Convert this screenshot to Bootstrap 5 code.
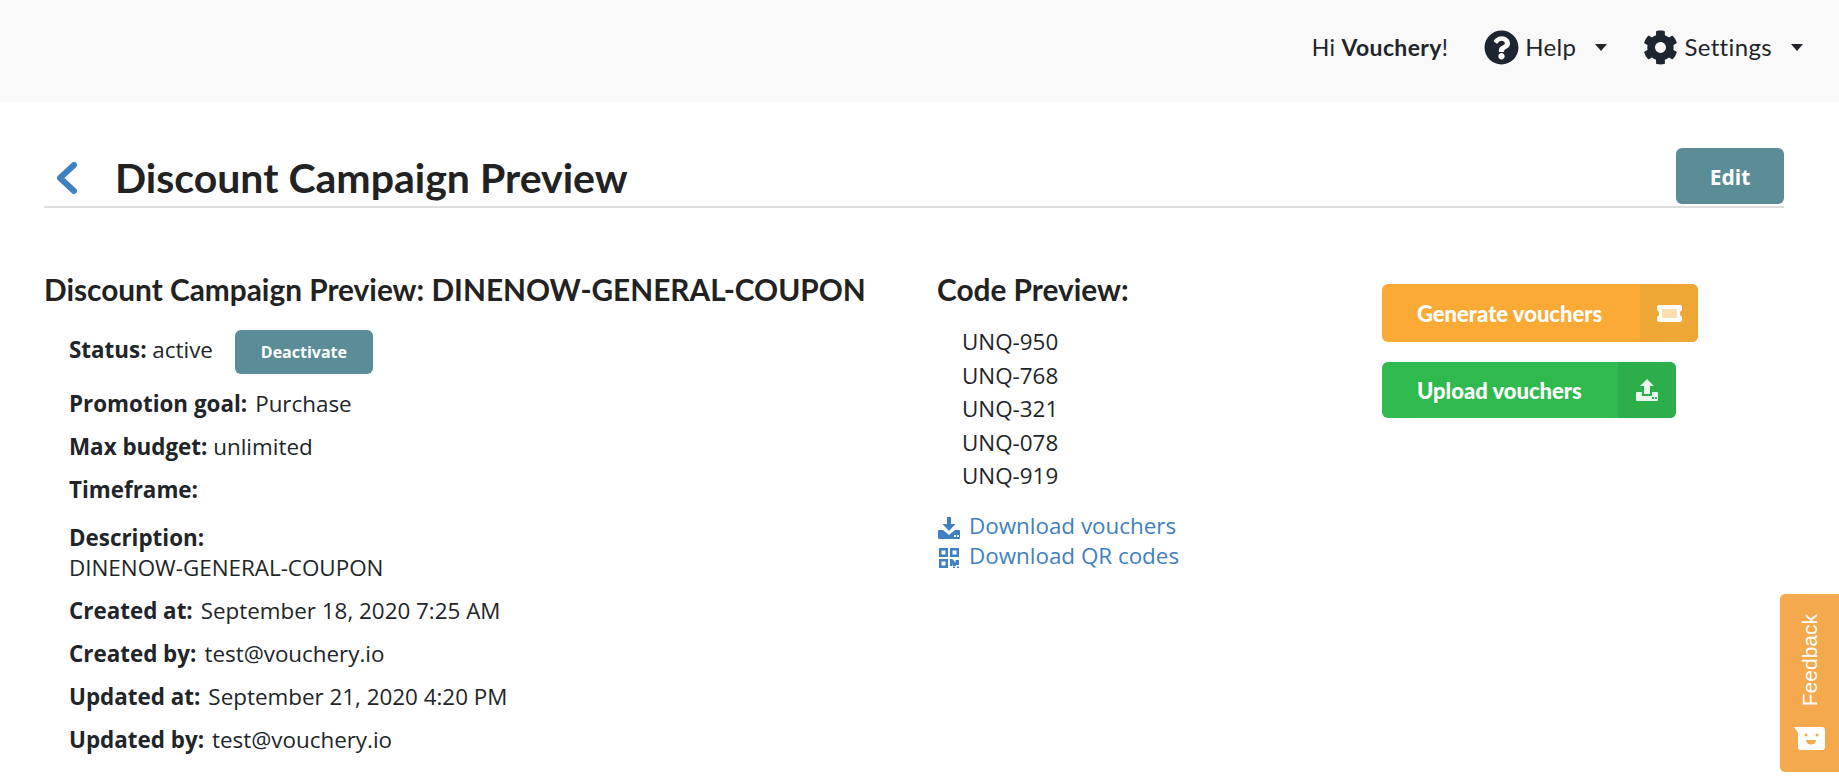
<!DOCTYPE html>
<html lang="en">
<head>
    <meta charset="UTF-8">
    <meta name="viewport" content="width=device-width, initial-scale=1.0">
    <title>Discount Campaign Preview</title>
    <link href="https://cdn.jsdelivr.net/npm/bootstrap@5.3.0/dist/css/bootstrap.min.css" rel="stylesheet">
    <style>
        body { font-family: "Open Sans", sans-serif; font-size: 22.4px; color: #212529; overflow: hidden; height: 778px; }
        .top-bar { height: 102px; background: #f9f9f9; padding: 0 36px 8px 0; font-family: Lato, sans-serif; font-size: 24px; letter-spacing: .35px; }
        .top-bar svg { display: block; margin-right: 6px; }
        .top-item { margin-left: 36px; }
        .hi-user { font-size: 23px; }
        .caret-down { width: 0; height: 0; margin-left: 19px; border-left: 6.5px solid transparent; border-right: 6.5px solid transparent; border-top: 7px solid #212529; }
        .page-head { margin: 46px 55px 0 44px; height: 58px; border-bottom: 2px solid #ddd; box-sizing: content-box; }
        .page-head h1 { font-family: Lato, sans-serif; font-weight: 700; font-size: 41px; color: #222; margin: 0 0 0 37px; line-height: 60px; }
        .back-arrow { margin-left: 10px; }
        .btn-teal { background: #5a8d96; color: #fff; font-weight: 700; border: 0; border-radius: 6px; }
        .btn-teal:hover { background: #5a8d96; color: #fff; }
        .btn-edit { width: 108px; height: 56px; font-size: 21px; padding-top: 9px; }
        .btn-deact { width: 138px; height: 44px; font-size: 16px; padding: 0; margin-left: 22px; }
        .main-cols { margin: 64px 55px 0 44px; }
        .info-col { width: 893px; }
        .code-col { width: 445px; }
        .sub-title { font-family: Lato, sans-serif; font-weight: 700; font-size: 29.8px; color: #222; margin: 0; line-height: 36px; }
        .info-list { padding-left: 25px; margin-top: 22px; }
        .info-row { line-height: 30px; margin-top: 13px; }
        .info-val { margin-left: 8px; }
        .status-text { padding-bottom: 4px; }
        .row-after-status { margin-top: 15px; }
        .row-gap { margin-top: 18px; }
        .code-list { padding-left: 25px; margin-top: 17px; line-height: 33.5px; }
        .dl-links { margin-top: 18px; line-height: 30px; }
        .dl-links a { color: #3f80c0; text-decoration: none; }
        .act-stack { margin-top: 12px; gap: 20px; }
        .act-btn { height: 58px; display: flex; align-items: stretch; color: #fff; font-family: Lato, sans-serif; font-weight: 900; border-radius: 6px; overflow: hidden; font-size: 22px; text-decoration: none; width: 316px; }
        .act-label { flex: 1; padding-left: 35px; display: flex; align-items: center; }
        .act-icon { width: 58px; display: flex; align-items: center; justify-content: center; }
        .act-orange { background: #fbaa35; }
        .act-orange .act-icon { background: #eea735; }
        .act-green { background: #2fba4f; height: 56px; width: 294px; }
        .act-green .act-icon { background: #2cae4a; }
        .feedback-tab { position: absolute; right: 0; top: 594px; width: 59px; height: 178px; background: #f3a94c; border-radius: 5px 0 0 5px; color: #fff; font-family: "Liberation Sans", sans-serif; font-size: 21px; }
        .feedback-text { position: absolute; left: 18px; top: 20px; writing-mode: vertical-rl; transform: rotate(180deg); line-height: 24px; }
        .feedback-face { position: absolute; left: 14px; top: 133px; }
    </style>
</head>
<body class="position-relative">
<div class="top-bar d-flex justify-content-end align-items-center">
    <span class="hi-user">Hi <b>Vouchery</b>!</span>
    <span class="d-flex align-items-center top-item">
        <svg width="35" height="35" viewBox="0 0 512 512" fill="#1c2530"><path d="M504 256c0 137-111 248-248 248S8 393 8 256 119 8 256 8s248 111 248 248zM263 90c-55 0-90 23-118 64-4 5-3 13 3 17l35 26c5 4 13 3 17-2 18-23 31-36 58-36 21 0 47 14 47 34 0 15-13 23-33 35-24 13-56 30-56 72v10c0 7 5 12 12 12h56c7 0 12-5 12-12v-6c0-29 85-31 85-110 0-60-62-104-118-104zm-7 246c-26 0-47 21-47 47s21 47 47 47 47-21 47-47-21-47-47-47z"/></svg>
        Help
        <span class="caret-down"></span>
    </span>
    <span class="d-flex align-items-center top-item">
        <svg width="35" height="35" viewBox="0 0 512 512" fill="#1c2530"><path d="M487 316l-42-25c4-23 4-47 0-70l42-25c5-3 7-9 6-14-11-36-30-68-55-95-4-4-10-5-15-2l-42 25c-18-15-39-27-61-35V26c0-6-4-11-9-12-37-8-75-8-110 0-6 1-10 6-10 12v49c-22 8-43 20-61 35L88 85c-5-3-11-2-15 2-25 27-44 59-55 95-2 5 1 11 6 14l42 25c-4 23-4 47 0 70l-42 25c-5 3-8 9-6 14 11 36 30 68 55 95 4 4 10 5 15 2l42-25c18 15 39 27 61 35v49c0 6 4 11 10 12 37 8 75 8 110 0 5-1 9-6 9-12v-49c22-8 43-20 61-35l42 25c5 3 11 2 15-2 25-27 44-59 55-95 1-5-1-11-6-14zM256 336c-44 0-80-36-80-80s36-80 80-80 80 36 80 80-36 80-80 80z"/></svg>
        Settings
        <span class="caret-down"></span>
    </span>
</div>

<div class="page-head d-flex align-items-start justify-content-between">
    <div class="d-flex align-items-center">
        <svg class="back-arrow" width="24" height="34" viewBox="0 0 24 34" fill="none" stroke="#3f80c0" stroke-width="6" stroke-linecap="round" stroke-linejoin="round"><path d="M20 4 6 17l14 13"/></svg>
        <h1>Discount Campaign Preview</h1>
    </div>
    <button class="btn btn-teal btn-edit">Edit</button>
</div>

<div class="main-cols d-flex">
    <div class="info-col">
        <h2 class="sub-title">Discount Campaign Preview: DINENOW-GENERAL-COUPON</h2>
        <div class="info-list">
            <div class="d-flex align-items-center"><span class="status-text"><strong>Status:</strong> active</span><button class="btn btn-teal btn-deact">Deactivate</button></div>
            <div class="info-row row-after-status"><strong>Promotion goal:</strong><span class="info-val">Purchase</span></div>
            <div class="info-row"><strong>Max budget:</strong> unlimited</div>
            <div class="info-row"><strong>Timeframe:</strong></div>
            <div class="info-row row-gap"><strong>Description:</strong><br>DINENOW-GENERAL-COUPON</div>
            <div class="info-row"><strong>Created at:</strong><span class="info-val">September 18, 2020 7:25 AM</span></div>
            <div class="info-row"><strong>Created by:</strong><span class="info-val">test@vouchery.io</span></div>
            <div class="info-row"><strong>Updated at:</strong><span class="info-val">September 21, 2020 4:20 PM</span></div>
            <div class="info-row"><strong>Updated by:</strong><span class="info-val">test@vouchery.io</span></div>
        </div>
    </div>
    <div class="code-col">
        <h2 class="sub-title">Code Preview:</h2>
        <div class="code-list">
            <div>UNQ-950</div><div>UNQ-768</div><div>UNQ-321</div><div>UNQ-078</div><div>UNQ-919</div>
        </div>
        <div class="dl-links">
            <div><svg width="24" height="24" viewBox="0 0 24 24" fill="#3f80c0" class="me-2 align-middle"><path fill-rule="evenodd" d="M10 1h4v7h4.500L12 15 5.500 8H10zM1 15a1 1 0 0 1 1-1h4l6 5 6-5h4a1 1 0 0 1 1 1v7a1 1 0 0 1-1 1H2a1 1 0 0 1-1-1zM17 19v2h2v-2zM20 19v2h2v-2z"/></svg><a href="#">Download vouchers</a></div>
            <div><svg width="24" height="24" viewBox="0 0 24 24" fill="#3f80c0" class="me-2 align-middle"><path fill-rule="evenodd" d="M2 2h9v9H2zM4.500 4.500v4h4v-4zM13 2h9v9h-9zM15.500 4.500v4h4v-4zM2 13h9v9H2zM4.500 15.500v4h4v-4zM13 13h2.500l3 4v-3H22v5h-3v1h-3.500v-3l-.5 3H13zM16 20.500h2V22h-2zM20 20.500h2V22h-2z"/></svg><a href="#">Download QR codes</a></div>
        </div>
    </div>
    <div class="act-stack d-flex flex-column">
        <a class="act-btn act-orange" href="#"><span class="act-label">Generate vouchers</span><span class="act-icon"><svg width="25" height="17" viewBox="0 0 25 17"><path fill="#fff" d="M2 0h21a2 2 0 0 1 2 2v3.500a2 3 0 0 0 0 6V15a2 2 0 0 1-2 2H2a2 2 0 0 1-2-2v-3.500a2 3 0 0 0 0-6V2a2 2 0 0 1 2-2z"/><rect x="5" y="4" width="15" height="9" fill="#f9dfae"/></svg></span></a>
        <a class="act-btn act-green" href="#"><span class="act-label">Upload vouchers</span><span class="act-icon"><svg width="24" height="24" viewBox="0 0 24 24"><path fill="#eaf7ec" fill-rule="evenodd" d="M12 1l7 7h-4v8h-6V8H5zM1 15a1 1 0 0 1 1-1h5v4h10v-4h5a1 1 0 0 1 1 1v7a1 1 0 0 1-1 1H2a1 1 0 0 1-1-1zM17 19v2h2v-2zM20 19v2h2v-2z"/></svg></span></a>
    </div>
</div>

<div class="feedback-tab">
    <span class="feedback-text">Feedback</span>
    <svg class="feedback-face" width="31" height="23" viewBox="0 0 31 23"><path fill="#fff" d="M0 0h28a3 3 0 0 1 3 3v17a3 3 0 0 1-3 3H7a3 3 0 0 1-3-3V6z"/><circle cx="12" cy="8" r="1.500" fill="#f3a94c"/><circle cx="23" cy="8" r="1.500" fill="#f3a94c"/><path fill="#f3a94c" d="M12 13h10a5 4.500 0 0 1-10 0z"/></svg>
</div>

<script src="https://cdn.jsdelivr.net/npm/bootstrap@5.3.0/dist/js/bootstrap.bundle.min.js"></script>
</body>
</html>
